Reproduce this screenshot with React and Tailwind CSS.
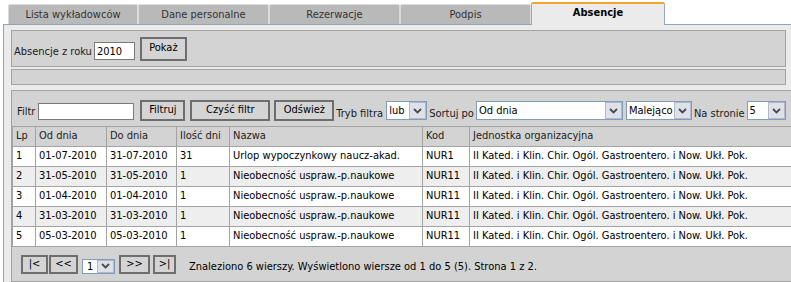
import React from 'react';

const font = { fontFamily: '"DejaVu Sans Condensed", "Liberation Sans", sans-serif' };

const tabs = ['Lista wykładowców', 'Dane personalne', 'Rezerwacje', 'Podpis'];

const rows = [
  ['1', '01-07-2010', '31-07-2010', '31', 'Urlop wypoczynkowy naucz-akad.', 'NUR1'],
  ['2', '31-05-2010', '31-05-2010', '1', 'Nieobecność uspraw.-p.naukowe', 'NUR11'],
  ['3', '01-04-2010', '01-04-2010', '1', 'Nieobecność uspraw.-p.naukowe', 'NUR11'],
  ['4', '31-03-2010', '31-03-2010', '1', 'Nieobecność uspraw.-p.naukowe', 'NUR11'],
  ['5', '05-03-2010', '05-03-2010', '1', 'Nieobecność uspraw.-p.naukowe', 'NUR11'],
];

const unit = 'II Kated. i Klin. Chir. Ogól. Gastroentero. i Now. Ukł. Pok.';

function Arrow() {
  return (
    <span className="flex h-full w-[17px] shrink-0 items-center justify-center border border-[#b5b8c8] bg-[#dfe1ea]">
      <svg width="9" height="6" viewBox="0 0 9 6">
        <path d="M1 1 L4.5 4.5 L8 1" fill="none" stroke="#4a4a4a" strokeWidth="1.8" />
      </svg>
    </span>
  );
}

function Select({ value, width }) {
  return (
    <div className={`flex h-[19px] items-center border border-[#7f9db9] bg-white ${width}`}>
      <span className="flex-1 truncate pl-[2px] text-[11px] leading-[17px] text-black">{value}</span>
      <Arrow />
    </div>
  );
}

function Btn({ children, className = '' }) {
  return (
    <button className={`border-2 border-[#6e6e6e] bg-[#d4d4d4] text-[11px] leading-[13px] text-black ${className}`}>
      {children}
    </button>
  );
}

export default function App() {
  return (
    <div className="h-[282px] w-[791px] overflow-hidden bg-white text-[11px] text-[#1a1a1a]" style={font}>
      {/* Tabs */}
      <div className="flex h-[24px] items-end pl-[8px]">
        {tabs.map((t, i) => (
          <div
            key={t}
            className={`flex h-[20px] items-center justify-center rounded-t-[2px] border-x border-t border-[#dcdcdc] bg-[#b9b9b9] pt-[1px] text-[11px] text-[#333] ${
              i === 0 ? 'w-[130px]' : 'w-[131px]'
            }`}
          >
            {t}
          </div>
        ))}
        <div className="relative z-10 -mb-[1px] flex h-[23px] w-[134px] items-start justify-center rounded-t-[2px] border-x border-t-2 border-x-[#9aa9b6] border-t-[#f2a52b] bg-[#ebebeb] pt-[2px] text-[11px] font-bold leading-[13px] text-black">
          Absencje
        </div>
      </div>

      {/* Outer panel */}
      <div className="ml-[3px] w-[900px] border-l border-t border-[#8fa4b4] bg-[#ebebeb] pl-[7px] pt-[5px]">
        <div className="flex h-[37px] w-[775px] items-end gap-[2px] border border-[#a3a3a3] bg-[#d3d3d3] pb-[5px] pl-[2px]">
          <span className="mb-[2px] text-[11px] leading-[14px]">Absencje z roku</span>
          <input
            readOnly
            value="2010"
            className="mb-[1px] h-[18px] w-[41px] border border-[#7a7a7a] bg-white pl-[2px] text-[11px] text-black outline-none"
            style={font}
          />
          <Btn className="ml-[3px] h-[24px] w-[47px] pb-[4px]">Pokaż</Btn>
        </div>

        <div className="mt-[2px] h-[16px] w-[775px] border border-[#a3a3a3] bg-[#d3d3d3]" />

        <div className="mt-[5px] w-[900px] border border-[#a3a3a3] bg-[#d3d3d3]">
          {/* Toolbar */}
          <div className="flex h-[35px] items-end pb-[5px] pl-[5px]">
            <span className="mb-[2px] leading-[14px]">Filtr</span>
            <input
              readOnly
              className="mb-[1px] ml-[3px] h-[17px] w-[96px] border border-[#7a7a7a] bg-white outline-none"
            />
            <Btn className="ml-[6px] h-[21px] w-[45px] pb-[3px]">Filtruj</Btn>
            <Btn className="ml-[5px] h-[21px] w-[80px] pb-[3px]">Czyść filtr</Btn>
            <Btn className="ml-[4px] h-[21px] w-[60px] pb-[3px]">Odśwież</Btn>
            <span className="ml-[2px] leading-[14px]">Tryb filtra</span>
            <div className="mb-[1px] ml-[3px]">
              <Select value="lub" width="w-[41px]" />
            </div>
            <span className="ml-[2px] leading-[14px]">Sortuj po</span>
            <div className="mb-[1px] ml-[2px]">
              <Select value="Od dnia" width="w-[147px]" />
            </div>
            <div className="mb-[1px] ml-[3px]">
              <Select value="Malejąco" width="w-[66px]" />
            </div>
            <span className="ml-[2px] leading-[14px]">Na stronie</span>
            <div className="mb-[1px] ml-[2px]">
              <Select value="5" width="w-[39px]" />
            </div>
          </div>

          {/* Table */}
          <table className="table-fixed border-collapse text-[11px] text-black">
            <colgroup>
              <col className="w-[23px]" />
              <col className="w-[71px]" />
              <col className="w-[70px]" />
              <col className="w-[53px]" />
              <col className="w-[193px]" />
              <col className="w-[47px]" />
              <col className="w-[440px]" />
            </colgroup>
            <thead>
              <tr className="h-[20px] bg-[#d3d3d3]">
                {['Lp', 'Od dnia', 'Do dnia', 'Ilość dni', 'Nazwa', 'Kod', 'Jednostka organizacyjna'].map((h) => (
                  <th key={h} className="border border-[#a3a3a3] pl-[3px] text-left font-normal text-[#222]">
                    {h}
                  </th>
                ))}
              </tr>
            </thead>
            <tbody>
              {rows.map((r, i) => (
                <tr key={r[0]} className={`h-[20px] ${i % 2 === 1 ? 'bg-[#eeeeee]' : 'bg-white'}`}>
                  {r.map((c, j) => (
                    <td key={j} className="whitespace-nowrap border border-[#a3a3a3] pl-[3px]">
                      {c}
                    </td>
                  ))}
                  <td className="whitespace-nowrap border border-[#a3a3a3] pl-[3px]">{unit}</td>
                </tr>
              ))}
            </tbody>
          </table>

          {/* Pager */}
          <div className="flex h-[34px] items-center pl-[9px] pt-[1px]">
            <Btn className="h-[19px] w-[27px] pb-[2px]">|&lt;</Btn>
            <Btn className="ml-[1px] h-[19px] w-[29px] pb-[2px]">&lt;&lt;</Btn>
            <div className="ml-[4px] mt-[3px] flex h-[15px] w-[33px] items-center border border-[#7f9db9] bg-white">
              <span className="flex-1 pl-[4px] leading-[13px] text-black">1</span>
              <Arrow />
            </div>
            <Btn className="ml-[4px] h-[19px] w-[31px] pb-[2px]">&gt;&gt;</Btn>
            <Btn className="ml-[3px] h-[19px] w-[23px] pb-[2px]">&gt;|</Btn>
            <span className="ml-[13px] mt-[6px] text-black">
              Znaleziono 6 wierszy. Wyświetlono wiersze od 1 do 5 (5). Strona 1 z 2.
            </span>
          </div>
        </div>
      </div>
    </div>
  );
}
